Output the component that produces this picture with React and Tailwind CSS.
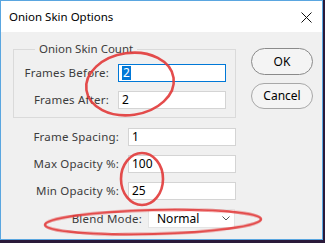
import React from 'react';

const font = { fontFamily: '"Noto Sans", "Open Sans", sans-serif' };

function Field({ label, value, selected, inputW = 'w-[108px]', gap = 'ml-[9px]' }) {
  return (
    <div className="flex items-center justify-end h-[18px]">
      <span className="text-[11.5px] text-[#3c3c3c] tracking-[0.2px]">{label}</span>
      <div
        className={`${gap} ${inputW} h-[18px] bg-white border flex items-center pl-[3px] text-[12px] text-black ${
          selected ? 'border-[#0078d7]' : 'border-[#d4d4d4]'
        }`}
      >
        {selected ? (
          <span className="bg-[#0078d7] text-white px-[1px] leading-[14px]">{value}</span>
        ) : (
          <span className="leading-[14px]">{value}</span>
        )}
      </div>
    </div>
  );
}

export default function App() {
  return (
    <div className="w-[325px] h-[243px] bg-[#2a1a3a] overflow-hidden" style={font}>
      <div className="relative w-[323px] h-[240px] border border-[#5aa6e0] bg-[#f0f0f0] flex flex-col">
        {/* Title bar */}
        <div className="h-[31px] bg-white flex items-center justify-between pl-[8px] pr-[10px]">
          <span className="text-[11.5px] text-black">Onion Skin Options</span>
          <svg width="11" height="11" viewBox="0 0 11 11" className="mt-[1px]">
            <path d="M0.5 0.5 L10.5 10.5 M10.5 0.5 L0.5 10.5" stroke="#111" strokeWidth="1" />
          </svg>
        </div>

        {/* Body */}
        <div className="flex pl-[12px]">
          <div className="w-[223px] flex flex-col">
            <fieldset className="mt-[9px] border border-[#dadada] pt-[7px] pb-[8px] pr-[9px] pl-[4px] flex flex-col gap-[9px]">
              <legend className="ml-[17px] px-[4px] text-[11.5px] text-[#3c3c3c] leading-[16px]">Onion Skin Count</legend>
              <Field label="Frames Before:" value="2" selected />
              <Field label="Frames After:" value="2" />
            </fieldset>
            <div className="mt-[10px] flex flex-col gap-[9px]">
              <Field label="Frame Spacing:" value="1" />
              <Field label="Max Opacity %:" value="100" />
              <Field label="Min Opacity %:" value="25" />
              <div className="flex items-center justify-end h-[19px] pr-[1px]">
                <span className="text-[11.5px] text-[#3c3c3c] tracking-[0.2px]">Blend Mode:</span>
                <div className="ml-[6px] w-[87px] h-[19px] bg-white border border-[#e4e4e4] flex items-center justify-between pl-[8px] pr-[4px] text-[12px] text-black">
                  <span>Normal</span>
                  <svg width="8" height="5" viewBox="0 0 8 5">
                    <path d="M0.5 0.5 L4 4 L7.5 0.5" fill="none" stroke="#555" strokeWidth="1" />
                  </svg>
                </div>
              </div>
            </div>
          </div>

          {/* Buttons */}
          <div className="ml-[15px] w-[62px] flex flex-col gap-[8px] pt-[16px]">
            <button className="h-[27px] rounded-full border border-[#8a8a8a] bg-[#f4f4f4] text-[12px] text-black">OK</button>
            <button className="h-[26px] rounded-full border border-[#a8a8a8] bg-[#f4f4f4] text-[12px] text-black">Cancel</button>
          </div>
        </div>

        {/* Red annotation ellipses */}
        <svg className="absolute left-[-1px] top-[-1px] pointer-events-none" width="325" height="243">
          <g fill="none" stroke="#e23c3c" strokeWidth="2.6" opacity="0.92">
            <ellipse cx="130" cy="84" rx="44" ry="31" transform="rotate(-8 130 84)" />
            <ellipse cx="142" cy="179" rx="21" ry="26" />
            <ellipse cx="153" cy="222" rx="108" ry="12" transform="rotate(-1.5 153 222)" />
          </g>
        </svg>
      </div>
    </div>
  );
}
